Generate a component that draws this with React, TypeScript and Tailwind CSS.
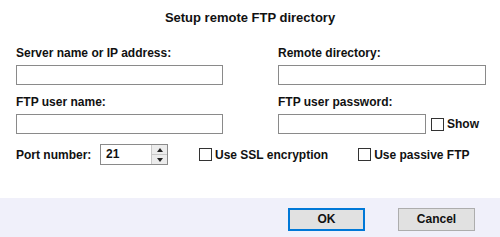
import React, { useState } from 'react';

const font = { fontFamily: '"Liberation Sans", Arial, sans-serif' };

const TextBox: React.FC<{ className?: string; type?: string }> = ({ className = '', type = 'text' }) => (
  <input type={type} className={`h-[20px] border border-[#8a8a8a] bg-white px-1 text-[12px] outline-none ${className}`} />
);

const Check: React.FC<{ label: string }> = ({ label }) => {
  const [on, setOn] = useState(false);
  return (
    <label className="flex items-center gap-[3px] text-[12px] font-bold text-[#111] cursor-default">
      <span
        onClick={() => setOn(!on)}
        className="w-[13px] h-[13px] border border-[#333] bg-white flex items-center justify-center text-[10px] leading-none"
      >
        {on ? '✓' : ''}
      </span>
      {label}
    </label>
  );
};

export default function App() {
  const [port, setPort] = useState(21);

  return (
    <div className="w-[500px] h-[237px] bg-white flex flex-col" style={font}>
      {/* Title */}
      <div className="h-[27px] flex items-end justify-center text-[13px] font-bold text-[#111]">
        Setup remote FTP directory
      </div>

      {/* Fields */}
      <div className="flex-1 px-[16px] pt-[19px]">
        <div className="grid grid-cols-[207px_208px] gap-x-[55px] gap-y-[10px]">
          <div className="flex flex-col gap-[5px]">
            <span className="text-[12px] font-bold text-[#111] leading-[14px]">Server name or IP address:</span>
            <TextBox className="w-[207px]" />
          </div>
          <div className="flex flex-col gap-[5px]">
            <span className="text-[12px] font-bold text-[#111] leading-[14px]">Remote directory:</span>
            <TextBox className="w-[208px]" />
          </div>
          <div className="flex flex-col gap-[5px]">
            <span className="text-[12px] font-bold text-[#111] leading-[14px]">FTP user name:</span>
            <TextBox className="w-[207px]" />
          </div>
          <div className="flex flex-col gap-[5px]">
            <span className="text-[12px] font-bold text-[#111] leading-[14px]">FTP user password:</span>
            <div className="flex items-center gap-[5px]">
              <TextBox type="password" className="w-[148px]" />
              <Check label="Show" />
            </div>
          </div>
        </div>

        {/* Port row */}
        <div className="flex items-center mt-[10px]">
          <span className="text-[12px] font-bold text-[#111] w-[84px]">Port number:</span>
          <div className="flex items-stretch h-[21px] w-[68px] border border-[#8a8a8a] bg-white">
            <span className="flex-1 px-[5px] text-[12px] font-bold text-[#111] leading-[19px]">{port}</span>
            <div className="w-[16px] flex flex-col border-l border-[#c8c8c8] bg-[#ececec]">
              <button onClick={() => setPort(port + 1)} className="flex-1 flex items-center justify-center border-b border-[#c8c8c8]">
                <svg width="6" height="4" viewBox="0 0 6 4"><path d="M3 0L6 4H0Z" fill="#222" /></svg>
              </button>
              <button onClick={() => setPort(port - 1)} className="flex-1 flex items-center justify-center">
                <svg width="6" height="4" viewBox="0 0 6 4"><path d="M0 0H6L3 4Z" fill="#222" /></svg>
              </button>
            </div>
          </div>
          <div className="ml-[31px]">
            <Check label="Use SSL encryption" />
          </div>
          <div className="ml-[30px]">
            <Check label="Use passive FTP" />
          </div>
        </div>
      </div>

      {/* Footer */}
      <div className="h-[39px] bg-[#f0f0fa] flex items-center justify-end gap-[33px] pr-[25px] pt-[3px]">
        <button className="w-[77px] h-[23px] border-2 border-[#0078d7] bg-[#e1e1e1] text-[12px] font-bold text-[#111]">
          OK
        </button>
        <button className="w-[77px] h-[23px] border border-[#adadad] bg-[#e1e1e1] text-[12px] font-bold text-[#111]">
          Cancel
        </button>
      </div>
    </div>
  );
}
